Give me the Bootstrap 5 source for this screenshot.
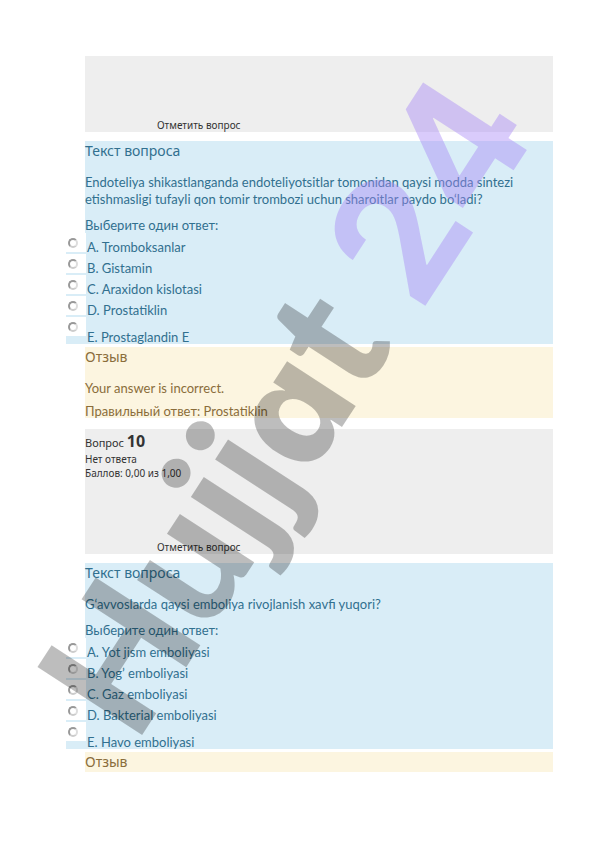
<!DOCTYPE html>
<html lang="ru">
<head>
<meta charset="utf-8">
<meta name="viewport" content="width=device-width, initial-scale=1">
<title>Hujjat 24</title>
<link rel="stylesheet" href="https://cdn.jsdelivr.net/npm/bootstrap@5.3.0/dist/css/bootstrap.min.css">
<style>
body { font-family: Lato, "Noto Sans", sans-serif; font-size: 13px; line-height: 17px; color: #333; background: #fff; }
.sheet { padding: 56px 43px 70px 85px; }
.info { background: #eee; font-family: "Noto Sans", sans-serif; font-size: 10px; line-height: 14px; margin-bottom: 9px; }
.info-short { min-height: 76px; }
.info-full { min-height: 125px; padding-top: 3px; }
.info h2 { font-size: 11px; line-height: 18px; font-weight: 400; margin: 0; }
.info h2 b { font-size: 16px; }
.flag { color: #333; text-decoration: none; margin-left: 72px; line-height: 13px; }
.question { background: #d9edf7; color: #31708f; margin-bottom: 3px; }
.feedback { background: #fcf5e0; color: #8a6d3b; margin-bottom: 11px; }
.caption { font-family: "Noto Sans", sans-serif; font-size: 14px; line-height: 20px; font-weight: 400; margin: 0; }
.question .caption { margin-bottom: 13px; }
.feedback p { margin: 0; padding-top: 13px; }
.feedback p + p { padding-top: 8px; line-height: 13px; }
.answers { margin: 0 0 0 -19px; background: #d9edf7; }
.answers legend { font-size: 13px; line-height: 16px; margin: 0; padding: 9px 0 0 19px; background: linear-gradient(90deg, #fff 19px, #d9edf7 19px); }
.choice { height: 21px; gap: 1px; line-height: 14px; }
.choice:last-child { height: 27px; }
.tick { width: 20px; height: 19px; background: #fff; }
.tick input { appearance: none; width: 10px; height: 10px; margin: 0 6px 0 0; border: 2px solid #999; border-right-color: #ddd; border-bottom-color: #ccc; border-radius: 50%; background: #fff; }
.tick input:checked { background: #666; }
.stamp { left: 0; top: 0; width: 100%; overflow: visible; pointer-events: none; }
.stamp text { font-family: Inter, sans-serif; font-weight: 700; font-feature-settings: "cv11"; }
.stamp .word { font-family: Lato, sans-serif; font-weight: 900; }
.stamp .round { font-family: Inter, sans-serif; font-weight: 800; }
</style>
<script src="https://cdn.jsdelivr.net/npm/bootstrap@5.3.0/dist/js/bootstrap.bundle.min.js"></script>
</head>
<body>
<main class="sheet position-relative">
  <section class="info info-short d-flex align-items-end"><a class="flag" href="#">Отметить вопрос</a></section>

  <form class="question">
    <h3 class="caption">Текст вопроса</h3>
    <p class="mb-0">Endoteliya shikastlanganda endoteliyotsitlar tomonidan qaysi modda sintezi etishmasligi tufayli qon tomir trombozi uchun sharoitlar paydo bo‘ladi?</p>
    <fieldset class="answers">
      <legend>Выберите один ответ:</legend>
      <div class="choice d-flex"><span class="tick d-flex align-items-center justify-content-center"><input type="radio" name="q9" id="q9a"></span><label class="align-self-end" for="q9a">A. Tromboksanlar</label></div>
      <div class="choice d-flex"><span class="tick d-flex align-items-center justify-content-center"><input type="radio" name="q9" id="q9b"></span><label class="align-self-end" for="q9b">B. Gistamin</label></div>
      <div class="choice d-flex"><span class="tick d-flex align-items-center justify-content-center"><input type="radio" name="q9" id="q9c"></span><label class="align-self-end" for="q9c">C. Araxidon kislotasi</label></div>
      <div class="choice d-flex"><span class="tick d-flex align-items-center justify-content-center"><input type="radio" name="q9" id="q9d"></span><label class="align-self-end" for="q9d">D. Prostatiklin</label></div>
      <div class="choice d-flex"><span class="tick d-flex align-items-center justify-content-center"><input type="radio" name="q9" id="q9e"></span><label class="align-self-end" for="q9e">E. Prostaglandin E</label></div>
    </fieldset>
  </form>

  <section class="feedback">
    <h3 class="caption">Отзыв</h3>
    <p>Your answer is incorrect.</p>
    <p>Правильный ответ: Prostatiklin</p>
  </section>

  <section class="info info-full d-flex flex-column">
    <h2>Вопрос <b>10</b></h2>
    <div>Нет ответа</div>
    <div>Баллов: 0,00 из 1,00</div>
    <a class="flag mt-auto align-self-start" href="#">Отметить вопрос</a>
  </section>

  <form class="question">
    <h3 class="caption">Текст вопроса</h3>
    <p class="mb-0">G‘avvoslarda qaysi emboliya rivojlanish xavfi yuqori?</p>
    <fieldset class="answers">
      <legend>Выберите один ответ:</legend>
      <div class="choice d-flex"><span class="tick d-flex align-items-center justify-content-center"><input type="radio" name="q10" id="q10a"></span><label class="align-self-end" for="q10a">A. Yot jism emboliyasi</label></div>
      <div class="choice d-flex"><span class="tick d-flex align-items-center justify-content-center"><input type="radio" name="q10" id="q10b"></span><label class="align-self-end" for="q10b">B. Yog’ emboliyasi</label></div>
      <div class="choice d-flex"><span class="tick d-flex align-items-center justify-content-center"><input type="radio" name="q10" id="q10c"></span><label class="align-self-end" for="q10c">C. Gaz emboliyasi</label></div>
      <div class="choice d-flex"><span class="tick d-flex align-items-center justify-content-center"><input type="radio" name="q10" id="q10d"></span><label class="align-self-end" for="q10d">D. Bakterial emboliyasi</label></div>
      <div class="choice d-flex"><span class="tick d-flex align-items-center justify-content-center"><input type="radio" name="q10" id="q10e"></span><label class="align-self-end" for="q10e">E. Havo emboliyasi</label></div>
    </fieldset>
  </form>

  <section class="feedback mb-0"><h3 class="caption">Отзыв</h3></section>

  <svg class="stamp position-absolute" viewBox="0 0 596 842">
    <g transform="translate(142 735) rotate(-57)" font-size="168">
      <text class="word" x="-13" y="0" font-size="172" fill="#000" fill-opacity=".26">Hujj<tspan class="round" font-size="150">a</tspan>t</text>
      <text x="504" y="4" font-size="170" fill="#a887f6" fill-opacity=".43">24</text>
    </g>
  </svg>
</main>
</body>
</html>
